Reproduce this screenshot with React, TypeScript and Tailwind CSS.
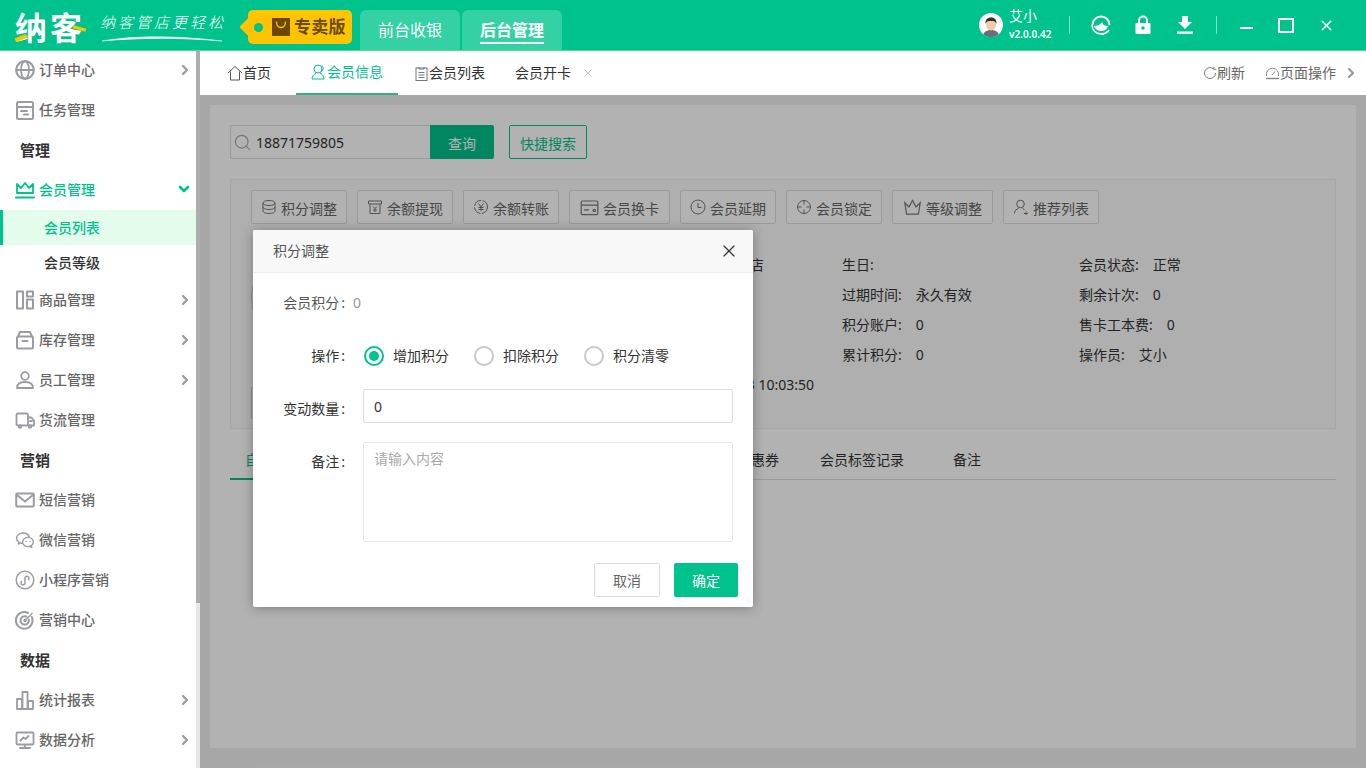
import React from "react";
import { ChevronRight, ChevronDown, X, Search } from "lucide-react";

const G = "#9b9ba6";
const S = ({ children, size = 20, c = G, sw = 1.8, className = "" }: any) => (
  <svg width={size} height={size} viewBox="0 0 20 20" fill="none" stroke={c} strokeWidth={sw} strokeLinecap="round" strokeLinejoin="round" className={"shrink-0 " + className}>{children}</svg>
);
const IGlobe = () => <S><circle cx="10" cy="10" r="8.8" strokeWidth="2.2"/><ellipse cx="10" cy="10" rx="4" ry="8.600"/><path d="M1.500 10h17"/></S>;
const ITask = () => <S sw="2"><rect x="2" y="2" width="16" height="17" rx="1.500"/><path d="M2 7h16M6 11h6M9 14.500h4"/></S>;
const ICrown = () => <S c="#00c28c"><path d="M2 13V4l4 4 4-5 4 5 4-4v9z"/><path d="M1 17.500h18" strokeWidth="2"/></S>;
const IGoods = () => <S sw="2"><rect x="2" y="1.500" width="6" height="17"/><rect x="12" y="1.500" width="6" height="5"/><rect x="12" y="9.500" width="6" height="9"/></S>;
const IStore = () => <S sw="2"><path d="M3 6.500 5 2h10l2 4.500"/><rect x="2" y="6.500" width="16" height="12" rx="1.500"/><path d="M7.500 11h5"/></S>;
const IUser = () => <S><circle cx="10" cy="6" r="3.800"/><path d="M2 18c0-4 3-6 8-6s8 2 8 6z"/></S>;
const ITruck = () => <S><rect x="1.500" y="3.500" width="11.500" height="12" rx="1.500"/><path d="M13 7.500h3.500l2.500 3v5h-6M15 11h2"/><circle cx="5" cy="16.500" r="1.300" fill="#fff"/><circle cx="15" cy="16.500" r="1.300" fill="#fff"/></S>;
const IMail = () => <S sw="2"><rect x="1.200" y="3.500" width="17.600" height="13" rx="1"/><path d="m2 5 8 6.500L18 5"/></S>;
const IWechat = () => <S sw="1.400"><path d="M8 3c-3.600 0-6.500 2.400-6.500 5.300 0 1.600.9 3 2.300 4l-.5 1.700 2-1c.6.2 1.200.3 1.800.3"/><path d="M8 3c3 0 5.600 1.700 6.300 4"/><ellipse cx="13" cy="12" rx="5.400" ry="4.600"/><path d="m16 15.500.8 2-2.300-1.200"/><path d="M11 11.500h.1M15 11.500h.1"/></S>;
const IMini = () => <S sw="1.500"><circle cx="10" cy="10" r="8.800"/><path d="M6.500 11.500a2 2 0 1 0 3.500 1.500V8a2 2 0 1 1 3.500 1.500"/></S>;
const ITarget = () => <S sw="2"><path d="M16.800 7a8.300 8.300 0 1 1-3.800-4"/><path d="M13.800 9.500a4.200 4.200 0 1 1-2.500-3"/><circle cx="10" cy="10.500" r=".8"/><path d="m10 10.500 7-7" strokeWidth="1.500"/></S>;
const IChart = () => <S><rect x="2" y="9" width="5" height="10"/><rect x="7.500" y="2" width="5" height="17"/><rect x="13" y="11" width="5" height="8"/></S>;
const IScreen = () => <S><rect x="1.500" y="2.500" width="17" height="12" rx="1"/><path d="m5.500 10.500 3-3 2 1.500 3-3M10 15v3M5 18h10"/></S>;

const Row = ({ icon, label, arrow }: any) => (
  <div className="h-10 flex items-center pl-[15px] pr-[3px]">
    {icon}
    <span className="ml-1 text-sm font-medium text-[#666] leading-5">{label}</span>
    {arrow && <ChevronRight size={16} strokeWidth={3.500} className="ml-auto text-[#9b9ba6]" />}
  </div>
);
const Sec = ({ label }: any) => <div className="h-10 flex items-center pl-5 text-[15px] font-bold text-[#333]">{label}</div>;

const Sidebar = () => (
  <aside className="w-[200px] h-[717px] shrink-0 flex bg-white overflow-hidden">
    <div className="w-[196px] -mt-px">
      <Row icon={<IGlobe />} label="订单中心" arrow />
      <Row icon={<ITask />} label="任务管理" />
      <Sec label="管理" />
      <div className="h-10 flex items-center pl-[15px] pr-[4px]">
        <ICrown />
        <span className="ml-1 text-sm font-medium text-[#00c28c]">会员管理</span>
        <ChevronDown size={16} strokeWidth={4} className="ml-auto text-[#00c28c] -mt-[3px]" />
      </div>
      <div className="h-[35px] flex items-center pl-[41px] bg-[#e3fcec] border-l-[3px] border-[#00c28c] text-sm font-medium text-[#00c28c]">会员列表</div>
      <div className="h-[35px] flex items-center pl-[44px] text-sm font-medium text-[#333]">会员等级</div>
      <Row icon={<IGoods />} label="商品管理" arrow />
      <Row icon={<IStore />} label="库存管理" arrow />
      <Row icon={<IUser />} label="员工管理" arrow />
      <Row icon={<ITruck />} label="货流管理" />
      <Sec label="营销" />
      <Row icon={<IMail />} label="短信营销" />
      <Row icon={<IWechat />} label="微信营销" />
      <Row icon={<IMini />} label="小程序营销" />
      <Row icon={<ITarget />} label="营销中心" />
      <Sec label="数据" />
      <Row icon={<IChart />} label="统计报表" arrow />
      <Row icon={<IScreen />} label="数据分析" arrow />
    </div>
    <div className="w-1 bg-[#e6e6e6] h-full"><div className="h-[552px] bg-[#adadad]" /></div>
  </aside>
);

const Header = () => (
  <header className="h-[51px] bg-[#00c28c] border-b-[1px] border-[#4fdc8f] flex items-stretch text-white shrink-0">
    <div className="flex items-center pl-[15px] w-[248px] shrink-0">
      <div className="relative w-[71px] h-[50px] flex items-center">
        <span className="text-[32px] leading-[50px] font-bold tracking-[3px] text-white whitespace-nowrap mt-[5px]">纳客</span>
        <span className="absolute left-0 top-[36px] w-[12px] h-[4px] bg-[#ffc400] -rotate-[20deg]" />
        <span className="absolute right-0 top-[27px] w-[13px] h-[3px] bg-[#ffc400] rotate-[15deg]" />
      </div>
      <div className="relative ml-[14px] w-[126px] h-[50px]">
        <span className="absolute left-0 top-[12px] text-[15px] leading-[20px] italic font-light whitespace-nowrap tracking-[3px]" style={{ fontFamily: '"Noto Sans CJK SC", sans-serif' }}>纳客管店更轻松</span>
        <svg width="122" height="10" viewBox="0 0 122 10" className="absolute left-[1px] top-[34px]"><path d="M1 7C30 2 70 1 121 7C80 3.500 40 3.500 1 7Z" fill="#fff" stroke="#fff" strokeWidth=".5" /></svg>
      </div>
    </div>
    <div className="flex items-center h-[50px]">
      <div className="w-[104px] h-[34px] mt-[4px] bg-[#ffc400] rounded-[5px] flex items-center pl-[24px] relative">
        <span className="absolute -left-[5px] top-[8px] w-[18px] h-[18px] rotate-45 bg-[#ffc400] rounded-[2px]" />
        <span className="absolute left-[6px] top-[13px] w-[9px] h-[9px] rounded-full bg-[#00c28c]" />
        <svg width="18" height="18" viewBox="0 0 18 18" className="shrink-0 relative"><rect width="18" height="18" fill="#6b4a00"/><path d="M4.500 3.500c0 4 1.500 6 4.500 6s4.500-2 4.500-6" stroke="#ffc400" strokeWidth="1.300" fill="none"/></svg>
        <span className="ml-[4px] text-[17px] leading-6 font-bold text-[#6b4a00] whitespace-nowrap tracking-[.3px]">专卖版</span>
      </div>
    </div>
    <div className="flex items-end ml-2 gap-[2px]">
      <div className="w-[100px] h-10 rounded-t-[6px] bg-[#33d1a3] flex items-center justify-center text-base">前台收银</div>
      <div className="w-[100px] h-10 rounded-t-[6px] bg-[#33d1a3] flex items-center justify-center text-base font-bold">
        <span className="border-b-2 border-white leading-[23px] mt-[3px]">后台管理</span>
      </div>
    </div>
    <div className="ml-auto flex items-center h-[50px]">
      <svg width="24" height="24" viewBox="0 0 24 24" className="shrink-0">
        <circle cx="12" cy="12" r="12" fill="#fff"/>
        <path d="M4.500 21.500c1-3.500 4-4.500 7.500-4.500s6.500 1 7.500 4.500A12 12 0 0 1 4.500 21.500z" fill="#6b6e78"/>
        <ellipse cx="12" cy="11.500" rx="5" ry="6" fill="#f6c9a6"/>
        <path d="M6.500 11c-.5-5 2.500-6.500 5.500-6.500s6 1.500 5.500 6.500c-1-2.500-2-3-5.500-3s-4.500.5-5.500 3z" fill="#333"/>
      </svg>
      <div className="ml-[6px] w-[60px] leading-none">
        <div className="text-[14px] leading-[18px] -mt-[1px] tracking-[0px]">艾小</div>
        <div className="text-[10px] leading-[15px] font-semibold whitespace-nowrap mt-[2px]">v2.0.0.42</div>
      </div>
      <div className="w-px h-[18px] bg-white/50" />
      <div className="w-[60px] flex justify-center ml-px">
        <svg width="22" height="22" viewBox="0 0 22 22" fill="none" stroke="#fff"><path d="M2.500 11a8.500 8.500 0 0 1 17 0" strokeWidth="2"/><path d="M2 11c0 5 4 9 9 9 3 0 6-1 8-4" strokeWidth="1.500"/><path d="M4 12c3 0 6-1 8-4 1 3 3 4 6 4-1 3-3 5-7 5-3 0-6-2-7-5z" fill="#fff" stroke="none"/><circle cx="13" cy="20" r="1.300" fill="#fff" stroke="none"/></svg>
      </div>
      <div className="w-6 flex justify-center">
        <svg width="16" height="20" viewBox="0 0 16 20"><path d="M4 9V5.500a4 4 0 0 1 8 0V9" stroke="#fff" strokeWidth="2" fill="none"/><path d="M1.500 8h13a1 1 0 0 1 1 1v9a1 1 0 0 1-1 1h-13a1 1 0 0 1-1-1V9a1 1 0 0 1 1-1z" fill="#fff"/><circle cx="8" cy="13" r="1.700" fill="#00c28c"/></svg>
      </div>
      <div className="w-6 flex justify-center ml-[18px]">
        <svg width="16" height="18" viewBox="0 0 16 18" fill="#fff"><path d="M5 0h6v6h4l-7 7-7-7h4z"/><rect y="15.500" width="16" height="2.300"/></svg>
      </div>
      <div className="w-px h-[18px] bg-white/50 ml-[19px]" />
      <div className="ml-[23px] w-[13px] h-[2px] bg-white mt-[6px]" />
      <div className="ml-[25px] w-4 h-[15px] border-2 border-white" />
      <X size={17} strokeWidth={2.200} className="ml-[24px] mr-[31px]" />
    </div>
  </header>
);

const TabsBar = () => (
  <div className="h-11 bg-white flex items-center text-sm shrink-0 pl-[28px]">
    <div className="flex items-center w-[68px] text-[#333]">
      <svg width="16" height="16" viewBox="0 0 16 16" fill="none" stroke="#555" strokeWidth="1" className="shrink-0 -ml-[1px]"><path d="M1 8 8 1.500 15 8M3.500 6.500V15h9V6.500"/></svg>
      首页
    </div>
    <div className="w-[102px] h-11 flex items-center justify-center text-[#00c28c] border-b-2 border-[#2fb27f]">
      <svg width="16" height="16" viewBox="0 0 16 16" fill="none" stroke="#00c28c" strokeWidth="1" className="shrink-0"><circle cx="7" cy="5" r="4"/><path d="M5 9.500C3 10 1 12 1 15h12c0-3-2-5-4-5.500M11 1.500c1.500 1 1.500 5-.5 6"/></svg>
      会员信息
    </div>
    <div className="flex items-center ml-4 text-[#333]"><svg width="15" height="15" viewBox="0 0 15 15" fill="none" stroke="#777" className="shrink-0"><rect x="2" y="2" width="11" height="12.500"/><path d="M5 1v2h5V1M4.500 6.500h6M4.500 9h6M4.500 11.500h6"/></svg>会员列表</div>
    <div className="flex items-center ml-[30px] text-[#333]">会员开卡<X size={14} strokeWidth={1} className="ml-[10px] text-[#999]" /></div>
    <div className="ml-auto flex items-center text-[#666]">
      <svg width="14" height="14" viewBox="0 0 14 14" fill="none" stroke="#777" strokeWidth="1" className="shrink-0"><path d="M12.500 7A5.500 5.500 0 1 1 10.500 2.800"/><path d="M10.800 .8v2.500h2.500"/></svg>
      刷新
      <svg width="15" height="14" viewBox="0 0 15 14" fill="none" stroke="#888" strokeWidth="1" className="shrink-0 ml-[20px]"><path d="M1.500 10a6.200 6.200 0 1 1 12 0"/><path d="M1 12.500h13" strokeWidth="1.500"/><path d="m7 9 3-3.500"/></svg>
      页面操作
      <ChevronRight size={16} strokeWidth={3.500} className="ml-[7px] mr-[7px] text-[#9b9ba6]" />
    </div>
  </div>
);

const Btn = ({ w, icon, label }: any) => (
  <div className={"h-[34px] border border-[#ddd] rounded-[2px] bg-white flex items-center justify-center gap-1 text-sm text-[#666] shrink-0 " + w}>{icon}<span className="mt-[3px]">{label}</span></div>
);
const T = ({ children, s = 16 }: any) => <svg width={s} height={s} viewBox="0 0 16 16" fill="none" stroke="#777" strokeWidth="1" className="shrink-0">{children}</svg>;

const Info = ({ a, b, g = "ml-[14px]" }: any) => <div className="h-[30px] flex items-center whitespace-nowrap text-sm text-[#333]"><span>{a}</span>{b && <span className={g}>{b}</span>}</div>;

const Content = () => (
  <div className="flex-1 bg-[#f0f0f0] p-[10px] min-h-0">
    <div className="h-[643px] bg-white p-5">
      <div className="flex h-[34px]">
        <div className="w-[200px] border border-[#ddd] border-r-0 rounded-l-[2px] flex items-center pl-[2px] text-[14px] text-[#333]">
          <Search size={19} strokeWidth={1.500} className="text-[#aaa] shrink-0" />
          <span className="ml-[4px]">18871759805</span>
        </div>
        <div className="w-16 bg-[#00c28c] text-white text-sm flex items-center justify-center rounded-r-[2px] pt-[3px]">查询</div>
        <div className="ml-[15px] w-[78px] border border-[#00c28c] text-[#00c28c] rounded-[2px] text-sm flex items-center justify-center pt-[3px]">快捷搜索</div>
      </div>
      <div className="mt-5 h-[250px] border border-[#eee] bg-[#fbfbfb] pt-[10px] px-5">
        <div className="flex gap-[10px]">
          <Btn w="w-[96px]" label="积分调整" icon={<T><ellipse cx="8" cy="4" rx="6" ry="2.500"/><path d="M2 4v8c0 1.400 2.700 2.500 6 2.500s6-1.100 6-2.500V4M2 8c0 1.400 2.700 2.500 6 2.500S14 9.400 14 8"/></T>} />
          <Btn w="w-[96px]" label="余额提现" icon={<T><path d="M1.500 2h13v3h-13zM3 5v9.500h10V5M6 7.500l2 2 2-2M8 9.500V13M6 11h4"/></T>} />
          <Btn w="w-[96px]" label="余额转账" icon={<T><circle cx="8" cy="8" r="6.500" strokeDasharray="9 1.500"/><path d="M5.500 4.500 8 8l2.500-3.500M8 8v4M5.500 8.500h5M5.500 10.500h5"/></T>} />
          <Btn w="w-[101px]" label="会员换卡" icon={<T s={19}><rect x="1" y="2.500" width="14" height="11.500" rx="1"/><path d="M1 6h14M3.500 10h4"/><circle cx="12" cy="10.500" r="1"/></T>} />
          <Btn w="w-[96px]" label="会员延期" icon={<T><circle cx="8" cy="8" r="7"/><path d="M8 4v4.500h3.500"/></T>} />
          <Btn w="w-[96px]" label="会员锁定" icon={<T><circle cx="8" cy="8" r="6.500"/><path d="M8 1.500v4M8 10.500v4M1.500 8h4M10.500 8h4"/></T>} />
          <Btn w="w-[101px]" label="等级调整" icon={<T s={19}><path d="M1.500 4 5 7.500 8 2l3 5.500L14.500 4l-1.500 9.500H3z"/></T>} />
          <Btn w="w-[96px]" label="推荐列表" icon={<T><circle cx="7.500" cy="5" r="3.800"/><path d="M1.500 14.500c0-3 2-4.500 4-5M9.500 9.500c1 .3 1.500.7 2 1.500M11 14.500h4M13 12.500v4"/></T>} />
        </div>
        <div className="flex mt-[26px]">
          <div className="w-[337px] shrink-0 flex flex-col">
            <div className="w-24 h-24 rounded-full border border-[#ccc] bg-white" />
            <div className="mt-[41px] w-[80px] h-[32px] border border-[#ccc] rounded-[2px] bg-white" />
          </div>
          <div className="w-[254px] shrink-0">
            <Info a="所属门店:" b="纳客演示总门店" g="ml-[18px]" />
            <div className="h-[90px]" />
            <Info a="注册时间:" b="2023-05-23 10:03:50" g="ml-[34px]" />
          </div>
          <div className="w-[237px] shrink-0">
            <Info a="生日:" />
            <Info a="过期时间:" b="永久有效" />
            <Info a="积分账户:" b="0" />
            <Info a="累计积分:" b="0" />
          </div>
          <div className="flex-1">
            <Info a="会员状态:" b="正常" />
            <Info a="剩余计次:" b="0" />
            <Info a="售卡工本费:" b="0" />
            <Info a="操作员:" b="艾小" />
          </div>
        </div>
      </div>
      <div className="mt-[15px] h-[36px] flex border-b border-[#ddd] text-sm text-[#333]">
        <div className="w-[200px] h-[36px] pl-[15px] pb-[3px] flex items-center border-b-2 border-[#00c28c] text-[#00c28c]">自助消费</div>
        <div className="w-[369px] pr-5 pb-[3px] flex items-center justify-end">会员优惠券</div>
        <div className="px-[21px] pb-[3px] flex items-center">会员标签记录</div>
        <div className="pl-7 pb-[3px] flex items-center">备注</div>
      </div>
    </div>
  </div>
);

const Lbl = ({ children, className = "" }: any) => <div className={"w-[92px] text-right text-sm text-[#333] leading-5 shrink-0 whitespace-nowrap " + className}>{children}<span className="ml-[2px]">:</span></div>;
const Radio = ({ label, on, w }: any) => (
  <div className={"flex items-center " + w}>
    <span className={"w-5 h-5 rounded-full border-2 flex items-center justify-center " + (on ? "border-[#00c28c]" : "border-[#c9c9c9]")}>
      {on && <span className="w-[10px] h-[10px] rounded-full bg-[#00c28c]" />}
    </span>
    <span className="ml-[9px] text-sm text-[#333]">{label}</span>
  </div>
);

const Modal = () => (
  <div className="absolute left-[53px] top-[135px] w-[500px] h-[377px] bg-white rounded-[2px] shadow-[0_1px_12px_rgba(0,0,0,0.3)] flex flex-col">
    <div className="h-[43px] shrink-0 bg-[#f8f8f8] border-b border-[#eee] flex items-center pl-5 pr-[14px] text-sm text-[#555] rounded-t-[2px]">
      积分调整
      <X size={20} strokeWidth={1.500} className="ml-auto text-[#333]" />
    </div>
    <div className="flex items-center h-[20px] mt-[20px]">
      <Lbl className="text-[#555]">会员积分</Lbl>
      <span className="ml-2 text-sm text-[#999]">0</span>
    </div>
    <div className="flex items-center mt-[33px] h-5">
      <Lbl>操作</Lbl>
      <div className="ml-[19px] flex">
        <Radio label="增加积分" on w="w-[110px]" />
        <Radio label="扣除积分" w="w-[110px]" />
        <Radio label="积分清零" w="w-[110px]" />
      </div>
    </div>
    <div className="flex items-center mt-[23px]">
      <Lbl className="pt-[6px]">变动数量</Lbl>
      <div className="ml-[18px] w-[370px] h-[34px] border border-[#ddd] rounded-[2px] pl-[10px] flex items-center text-sm text-[#333] pt-[2px]">0</div>
    </div>
    <div className="flex items-start mt-[19px]">
      <Lbl className="mt-[10px]">备注</Lbl>
      <div className="ml-[18px] w-[370px] h-[100px] border border-[#e6e6e6] rounded-[2px] pl-[10px] pt-[6px] text-sm leading-5 text-[#aaa]">请输入内容</div>
    </div>
    <div className="flex justify-end mt-[21px] pr-[15px] gap-[14px] text-sm">
      <div className="w-[66px] h-[34px] border border-[#ddd] rounded-[2px] text-[#666] flex items-center justify-center pt-[2px]">取消</div>
      <div className="w-16 h-[34px] bg-[#00c28c] rounded-[2px] text-white flex items-center justify-center pt-[2px]">确定</div>
    </div>
  </div>
);

export default function App() {
  return (
    <div className="w-[1366px] h-[768px] overflow-hidden flex flex-col bg-white" style={{ fontFamily: '"Noto Sans","Noto Sans CJK SC",sans-serif' }}>
      <Header />
      <div className="flex flex-1 min-h-0">
        <Sidebar />
        <main className="flex-1 flex flex-col min-w-0">
          <TabsBar />
          <div className="flex-1 relative flex flex-col min-h-0">
            <Content />
            <div className="absolute inset-0 bg-black/30" />
            <Modal />
          </div>
        </main>
      </div>
    </div>
  );
}
